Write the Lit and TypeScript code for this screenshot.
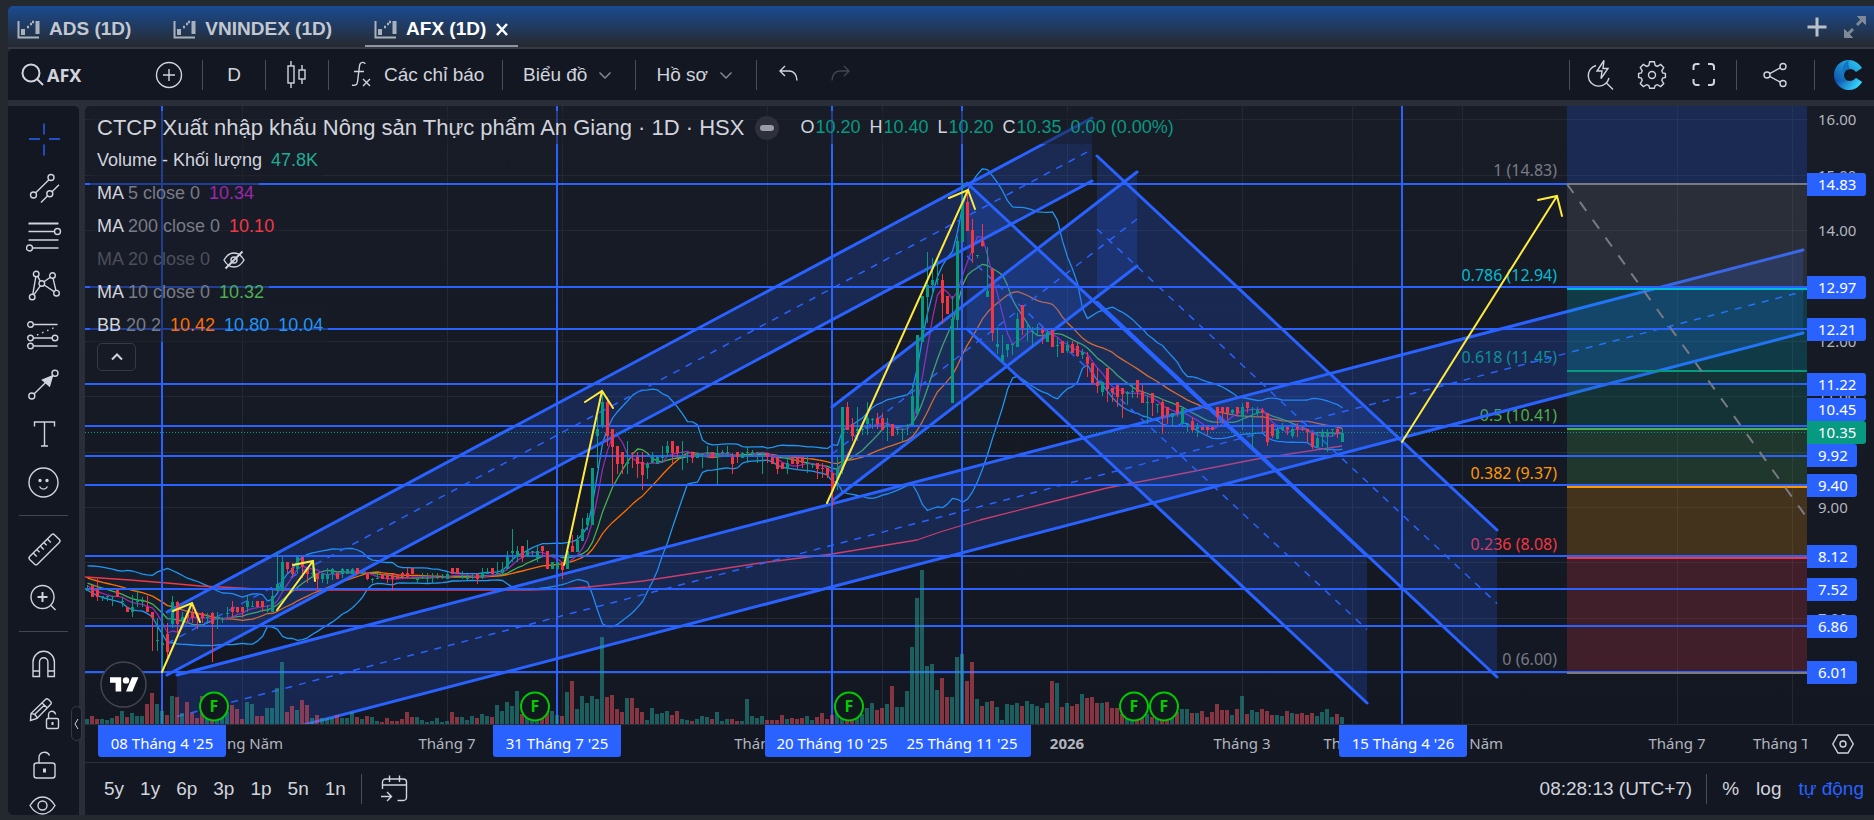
import { LitElement, html, svg, css } from "lit";
import { customElement, property, state } from "lit/decorators.js";
import { classMap } from "lit/directives/class-map.js";

/* ---------- market data: direction, high, body top, body bottom, low, volume ---------- */
const BARS = `
g585,589,591,591,5 r585,585,597,597,8 r579,590,597,601,5 g596,596,597,601,5 g596,596,597,601,4 g596,596,597,606,6 r589,590,597,597,8 g597,601,602,607,13 r607,607,612,612,7 g595,607,612,617,11
g589,601,602,607,8 g597,601,602,607,8 r596,607,612,612,20 r612,612,618,651,31 g618,640,641,651,20 g613,643,645,672,13 r623,634,652,660,9 g596,602,624,628,28 r601,602,624,633,27 g612,617,621,623,11
r612,613,618,622,22 r604,613,618,623,11 r612,613,618,629,6 r612,613,618,623,28 g613,617,618,624,15 r612,613,624,662,20 g612,617,619,629,15 g617,618,619,623,12 g607,613,614,617,12 r601,607,612,617,19
r607,607,612,613,15 r607,607,612,618,5 g596,601,607,612,22 g601,606,607,607,20 r601,601,607,607,8 r601,601,607,612,8 g605,610,611,612,16 g590,596,612,612,16 g551,584,591,591,36 g557,562,591,591,62
r562,562,569,573,12 r563,568,574,578,18 g557,557,569,574,14 r557,557,567,578,24 r567,568,574,583,19 g562,573,574,578,6 r573,573,579,590,9 g573,574,579,583,6 g568,574,579,584,6 g568,569,574,580,6
r573,573,579,579,9 g568,569,574,578,6 g569,569,574,574,6 g568,569,574,574,12 r568,568,574,574,7 g572,573,574,574,5 r573,573,579,580,8 g578,579,580,583,7 g574,578,579,579,3 r574,574,579,579,2
r573,574,579,583,6 r574,574,579,590,3 r574,574,579,579,3 r572,573,577,579,5 r568,573,577,579,12 r568,568,574,574,7 g577,579,580,583,7 g573,577,578,579,4 g573,578,579,583,2 g573,577,578,583,3
g573,577,578,579,6 g574,577,578,579,2 g572,574,579,579,3 r568,568,574,574,12 r568,568,574,574,7 g571,577,578,579,7 g574,578,579,580,4 g574,577,578,579,8 r573,574,579,584,6 g568,573,578,579,10
g568,573,574,574,8 r568,568,574,574,7 g562,573,574,574,19 g562,569,573,574,13 g551,557,569,569,22 g529,551,553,562,18 g546,551,557,562,33 r546,546,558,562,10 g540,551,557,557,8 g551,551,552,557,5
g546,551,558,562,6 r546,546,551,557,8 r551,551,569,569,12 g562,562,569,569,13 g562,562,569,569,9 r562,562,570,579,8 g547,551,569,569,32 r535,546,552,552,43 g535,540,552,552,15 g518,529,541,541,28
g513,518,525,530,21 g468,468,525,525,28 g417,429,436,468,25 g391,402,425,428,87 r397,402,436,446,27 r429,429,447,485,29 r446,446,464,474,15 r452,452,464,474,12 g441,462,464,474,26 r452,453,454,468,26
r452,457,464,478,16 r452,462,475,490,12 g462,464,468,479,4 g452,457,463,463,16 g457,457,464,464,10 g446,457,458,463,11 g441,446,453,457,13 r441,441,453,463,9 r446,446,453,457,13 g441,452,453,470,5
g452,453,454,463,4 r452,453,458,463,3 g452,453,458,458,5 g453,454,455,468,8 g446,452,453,457,7 r452,452,458,458,5 g446,453,457,484,12 g450,452,453,457,3 g446,452,453,457,5 r453,457,464,474,5
r452,452,457,463,3 g452,453,458,458,3 g446,452,453,463,25 g450,452,453,457,8 g452,452,453,463,6 g452,453,454,474,8 r453,453,457,463,4 r457,457,464,464,4 r457,457,469,474,4 r463,463,469,469,9
g457,463,469,474,5 r457,457,464,464,6 r457,457,464,469,5 r457,457,463,468,6 g457,463,464,473,8 g463,464,465,468,4 r463,463,469,479,7 r463,468,469,478,11 r468,468,475,478,5 r472,473,491,507,9
g457,468,479,490,12 g407,407,470,474,20 r402,407,430,430,6 r418,424,436,441,8 g407,429,431,441,10 g423,429,430,435,10 g402,418,424,435,16 g418,419,420,429,21 r413,418,424,429,14 r413,418,430,430,16
g418,424,425,441,20 r424,424,436,436,38 g429,429,430,435,17 g428,429,430,441,17 g424,425,426,435,33 g383,396,425,425,77 g335,335,414,415,126 g296,296,342,342,154 g252,285,297,323,58 g258,280,285,296,60
g258,279,280,285,34 r274,280,303,324,46 r296,296,314,314,27 g296,319,403,403,27 g236,241,320,330,67 g180,202,242,242,70 r192,202,231,231,43 r219,230,253,263,62 g255,255,256,258,25 r224,241,246,247,18
g247,291,297,297,22 r269,269,333,341,23 g327,344,347,354,17 g335,355,361,362,4 g344,344,350,357,20 g343,344,345,355,19 g313,319,347,347,21 r305,305,328,335,18 g323,329,330,341,23 g327,331,332,346,20
g324,329,330,336,18 r327,330,333,344,16 g330,332,342,342,21 r330,330,347,347,43 g338,345,346,357,41 r341,341,353,353,17 g341,345,351,353,21 r341,344,353,353,18 r343,346,356,357,20 g349,352,355,359,30
r352,357,364,377,26 r363,363,383,385,27 r368,382,386,393,21 g382,382,392,396,21 r368,368,389,402,22 r388,388,393,402,16 r385,385,397,407,16 r388,388,394,418,10 g391,392,394,405,8 g383,391,392,398,7
r380,380,392,398,9 r385,391,403,403,8 g395,402,403,424,10 r393,393,403,416,7 g404,404,405,413,6 r399,402,417,434,12 r407,407,415,424,9 g413,413,417,426,8 r402,402,413,417,12 g408,408,424,425,15
g423,424,425,432,15 r417,421,430,432,11 g423,427,429,437,11 r427,427,430,430,13 r426,427,430,435,7 r427,427,430,430,12 r407,407,417,425,20 r407,407,413,423,14 r407,407,413,420,14 g409,410,413,415,9
r407,407,413,416,15 g403,407,417,430,28 r402,402,408,413,10 g407,409,410,448,14 g407,410,413,417,12 r408,410,413,432,15 r413,413,442,446,13 r424,424,436,438,9 g427,429,439,439,9 g423,427,430,431,8
r427,427,430,435,13 g427,429,436,438,11 r423,427,429,437,10 r427,429,430,431,11 r429,429,432,442,9 r432,433,447,449,11 g433,438,447,448,8 g429,433,437,447,12 g429,433,436,452,15 g429,429,430,437,7
r428,429,433,438,10 g429,433,442,442,7`
  .trim()
  .split(/\s+/)
  .map((entry) => {
    const [high, top, bottom, low, volume] = entry.slice(1).split(",").map(Number);
    return { up: entry[0] === "g", high, top, bottom, low, volume };
  });

const FIRST_X = 87;
const STEP = 5;
const WARMUP = [569, 567, 569, 570, 571, 573, 573, 576, 577, 577, 578, 579, 580, 580, 581, 582, 582, 584, 586, 588];
const CLOSES = [...WARMUP, ...BARS.map((b) => (b.up ? b.top : b.bottom))];

const windowAt = (i: number, n: number) => CLOSES.slice(i + WARMUP.length - n + 1, i + WARMUP.length + 1);
const mean = (v: number[]) => v.reduce((a, b) => a + b, 0) / v.length;
const deviation = (v: number[]) => {
  const m = mean(v);
  return Math.sqrt(mean(v.map((a) => (a - m) ** 2)));
};
const series = (fn: (i: number) => number) =>
  BARS.map((_, i) => `${FIRST_X + STEP * i + 0.5},${fn(i).toFixed(1)}`);

const MA5 = series((i) => mean(windowAt(i, 5)));
const MA10 = series((i) => mean(windowAt(i, 10)));
const BASIS = series((i) => mean(windowAt(i, 20)));
const UPPER = series((i) => mean(windowAt(i, 20)) - 2 * deviation(windowAt(i, 20)));
const LOWER = series((i) => mean(windowAt(i, 20)) + 2 * deviation(windowAt(i, 20)));
const MA200 =
  "85,577 130,580 167,583 200,586 240,588 280,590 470,590 530,590 560,589 588,587 643,581 760,563 832,554 917,540 940,532 980,520 1047,503 1107,488 1180,474 1262,458 1342,446";

/* ---------- drawings ---------- */
const V_GRID = [242, 447, 562, 767, 882, 1067, 1242, 1352, 1462, 1677, 1792];
const H_GRID = [119, 175, 230, 286, 341, 396, 452, 507, 562, 618, 673];
const V_LINES = [162, 557, 832, 962, 1402];
const LEVELS = [184, 287, 329, 384, 426, 456, 485, 556, 589, 626, 672];

/* x1, x2, upper y at x1 and x2, lower y at x1 and x2 */
const CHANNELS = [
  [167, 1092, 612, 118, 675, 181],
  [177, 1803, 675, 250, 758, 333],
  [832, 1137, 407, 172, 501, 266],
  [967, 1367, 183, 556, 329, 703],
  [1097, 1497, 156, 530, 302, 677],
];

const ARROWS = [
  "M162 672L192 603M173 611L192 603L200 622",
  "M277 610L313 561M293 565L313 561L315 581",
  "M564 565L602 391M585 402L602 391L613 408",
  "M827 503L968 190M949 198L968 190L975 209",
  "M1402 442L1557 196M1538 200L1557 196L1562 216",
];

const FIB = [
  { y: 184, label: "1 (14.83)", color: "#787b86" },
  { y: 289, label: "0.786 (12.94)", color: "#00bcd4" },
  { y: 371, label: "0.618 (11.45)", color: "#089981" },
  { y: 429, label: "0.5 (10.41)", color: "#4caf50" },
  { y: 487, label: "0.382 (9.37)", color: "#ff9800" },
  { y: 558, label: "0.236 (8.08)", color: "#f23645" },
  { y: 673, label: "0 (6.00)", color: "#787b86" },
];
const FIB_FILLS = ["#787b86", "#00bcd4", "#089981", "#4caf50", "#ff9800", "#f23645"];

const FLAGS = [214, 535, 849, 1134, 1164];

const PRICE_TAGS = [
  { y: 185, text: "14.83" },
  { y: 288, text: "12.97" },
  { y: 330, text: "12.21" },
  { y: 385, text: "11.22" },
  { y: 410, text: "10.45" },
  { y: 456, text: "9.92" },
  { y: 486, text: "9.40" },
  { y: 557, text: "8.12" },
  { y: 590, text: "7.52" },
  { y: 627, text: "6.86" },
  { y: 673, text: "6.01" },
  { y: 433, text: "10.35", last: true },
];

const MONTHS = [
  { x: 242, text: "Tháng Năm" },
  { x: 447, text: "Tháng 7" },
  { x: 767, text: "Tháng 10" },
  { x: 1067, text: "2026", bold: true },
  { x: 1242, text: "Tháng 3" },
  { x: 1352, text: "Tháng 4" },
  { x: 1462, text: "Tháng Năm" },
  { x: 1677, text: "Tháng 7" },
  { x: 1792, text: "Tháng Tám" },
];
const DATE_TAGS = [
  { x: 162, w: 128, text: "08 Tháng 4 '25" },
  { x: 557, w: 128, text: "31 Tháng 7 '25" },
  { x: 832, w: 134, text: "20 Tháng 10 '25" },
  { x: 962, w: 138, text: "25 Tháng 11 '25" },
  { x: 1403, w: 128, text: "15 Tháng 4 '26" },
];

/* ---------- icons ---------- */
const ICONS: Record<string, unknown> = {
  cross: svg`<path d="M3 18h11M23 18h11M18 2.500v11M18 23.500v11"/>`,
  trend: svg`<circle cx="7.500" cy="25" r="3"/><circle cx="25" cy="7.500" r="3"/><path d="M9.700 22.800L22.900 9.700M15 32.500l6.700-6.700M26 21.700l7-7"/><circle cx="23.800" cy="23.800" r="3"/>`,
  fib: svg`<path d="M2.500 4.500h30" stroke-width="2"/><path d="M2.500 12.500h26M2.500 21h30M6.500 29h26"/><circle cx="31.500" cy="12.500" r="3"/><circle cx="3.500" cy="29" r="3"/>`,
  pattern: svg`<circle cx="10.200" cy="6" r="2.800"/><circle cx="26.500" cy="7.500" r="2.800"/><circle cx="15.800" cy="15.500" r="2.800"/><circle cx="6.200" cy="29" r="2.800"/><circle cx="30.500" cy="25.200" r="2.800"/><path d="M9.800 8.800L6.800 26.200M11.700 8.400l2.600 4.700M18 13.800l6.300-4.600M27 10.200l2.900 12.200M14.300 17.900L8 26.600M18.200 17l9.900 6.700"/>`,
  forecast: svg`<circle cx="4.500" cy="7.500" r="2.800"/><circle cx="4.500" cy="21" r="2.800"/><circle cx="29" cy="21" r="2.800"/><circle cx="4.500" cy="29" r="2.800"/><path d="M7.500 7.500h24M7.500 21h18.500M7.500 29h24"/><path d="M11 18L31 9.500" stroke-dasharray="1.500 4"/>`,
  arrow: svg`<circle cx="5.800" cy="30" r="3"/><circle cx="29" cy="7.200" r="3"/><path d="M8 28L27 9.300"/><path d="M26.500 9.800L16.500 14l7 6z" fill="currentColor"/>`,
  text: svg`<path d="M8.500 11.500v-4.500h20v4.500M18.500 7v24M15 31h7"/>`,
  smile: svg`<circle cx="17.500" cy="18.500" r="14.500"/><circle cx="14" cy="16.500" r="1" fill="currentColor"/><circle cx="21" cy="16.500" r="1" fill="currentColor"/><path d="M13.500 22.500c2 3.500 6 3.500 8 0"/>`,
  ruler: svg`<g transform="rotate(-45 18.500 18.500)"><rect x="1" y="13" width="35" height="11" rx="2"/><path d="M8 13v5M13 13v4M18 13v5M23 13v4M28 13v5"/></g>`,
  zoom: svg`<circle cx="16.500" cy="17" r="11.500"/><path d="M25 25.500l4.500 4.500"/><path d="M16.500 12v10M11.500 17h10" stroke-width="2"/>`,
  magnet: svg`<path d="M7 29.500V15a10.700 10.700 0 0 1 21.400 0v14.500h-6.500V15a4.200 4.200 0 0 0-8.400 0v14.500zM7 24h6.500M21.900 24h6.500"/>`,
  pencil: svg`<path d="M4.500 24.500l.500-7L19.500 3.500c1-1 2-.800 3 0l2 2c1 1 1 2 0 3L11 22.500zM5 17.500c3 0 6 2 6 5M16 7l5.500 5M8.500 18.500l10-9.500"/><rect x="20.500" y="22.500" width="12" height="10" rx="1.500"/><path d="M22.500 22.500v-3.500a3.500 3.500 0 0 1 7-.500"/><path d="M26.500 26v3" stroke-width="2"/>`,
  lock: svg`<rect x="8" y="18" width="21" height="15" rx="2.500"/><path d="M13 18v-5a5.500 5.500 0 0 1 10.500-2.500"/><path d="M18.500 23.500v4" stroke-width="3"/>`,
  eye: svg`<path d="M4 18.500c3-5 8-8.500 12.500-8.500s9.500 3.500 12.500 8.500c-3 5-8 8.500-12.500 8.500S7 23.500 4 18.500z"/><circle cx="16.500" cy="18.500" r="4.500"/>`,
  search: svg`<circle cx="16" cy="16" r="8.500" stroke-width="2"/><path d="M22 22l6 6" stroke-width="2"/>`,
  plus: svg`<circle cx="18" cy="18" r="12.500"/><path d="M18 12v12M12 18h12"/>`,
  candles: svg`<path d="M12 4v5M12 26v5M23 8v5M23 22v5"/><rect x="9" y="9" width="6" height="17"/><rect x="20" y="13" width="6" height="9"/>`,
  fx: svg`<path d="M22 7c0-2-5-3-5.500 2l-2 16c-.300 4-4.500 3.500-5.500 3M11 14.500h10M20 22l7 7M27 22l-7 7"/>`,
  undo: svg`<path d="M15 9l-5 5 5 5M10 14h9c5 0 8 4 8 9.500"/>`,
  redo: svg`<path d="M22 9l5 5-5 5M27 14h-9c-5 0-8 4-8 9.500"/>`,
  quick: svg`<path d="M14 8.500a10.500 10.500 0 1 0 13 12.500M24.500 26l6.500 6.500"/><path d="M22 3.500l-7 10.500h5l-1 7.500 7-10h-5z"/>`,
  gear: svg`<circle cx="18" cy="18" r="3.500"/><path d="M15.700 4.800h4.600l.9 3.700 2.200.9 3.300-2 3 3.100-1.900 3.300.9 2.200 2.700.5v4l-2.700.6-.9 2.200 1.900 3.300-3 3-3.300-1.900-2.200.9-.9 2.700h-4.600l-.9-2.700-2.200-.9-3.300 1.900-3-3 1.900-3.300-.9-2.200-2.700-.6v-4l2.700-.5.900-2.200-1.900-3.300 3-3.100 3.300 2 2.200-.9z"/>`,
  full: svg`<path d="M7.500 13v-3a3 3 0 0 1 3-3h3M22 7h3a3 3 0 0 1 3 3v3M28 22v3a3 3 0 0 1-3 3h-3M13.500 28h-3a3 3 0 0 1-3-3v-3" stroke-width="2"/>`,
  share: svg`<circle cx="9" cy="18" r="3"/><circle cx="25" cy="9.500" r="3"/><circle cx="25" cy="26.500" r="3"/><path d="M11.700 16.600l10.600-5.700M11.700 19.400l10.600 5.700"/>`,
  calendar: svg`<path d="M6.500 18V11a3 3 0 0 1 3-3h18a3 3 0 0 1 3 3v15.500a3 3 0 0 1-3 3h-6M6.500 14h24M13.500 4.500V11M23.500 4.500V11M5 25.500h10M11 21l4.500 4.500L11 30"/>`,
  hex: svg`<path d="M13 9h10l5.200 9L23 27H13l-5.200-9z"/><circle cx="18" cy="18" r="3"/>`,
  hidden: svg`<path d="M8 18c2.500-4.500 6-7 10-7s7.500 2.500 10 7c-2.500 4.500-6 7-10 7s-7.500-2.500-10-7z"/><circle cx="18" cy="18" r="3"/><path d="M26.500 9.500l-17 17" stroke-width="2"/>`,
  down: svg`<path d="M12.500 15.500l5.500 5.500 5.500-5.500"/>`,
  up: svg`<path d="M13 20.500l5-5 5 5" stroke-width="2"/>`,
  close: svg`<path d="M13 13l10 11M23 13l-10 11" stroke-width="2.500"/>`,
  add: svg`<path d="M18 8.500v19M8.500 18h19" stroke-width="3"/>`,
  expand: svg`<path d="M20 16l5-5M16 20l-5 5" stroke-width="3"/><path d="M20.500 7.500h8v8zM7.500 20.500v8h8z" fill="currentColor" stroke-width="1"/>`,
  tab: svg`<path d="M8.500 10v16.500H29" stroke-width="2"/><path d="M11 18h4v6h-4zM25.500 10h4v13h-4z" fill="currentColor" stroke="none"/><path d="M17 16h2M20 13h2M22 11h2" stroke-width="2.500"/>`,
};

const icon = (name: string) => html`<svg class="icon" width="36" height="36" viewBox="0 0 36 36" fill="none" stroke="currentColor" stroke-width="1.400" aria-hidden="true">${ICONS[name]}</svg>`;

const iconStyles = css`
  .icon {
    display: block;
    flex: none;
  }
  button {
    display: flex;
    align-items: center;
    justify-content: center;
    padding: 0;
    border: 0;
    background: none;
    color: inherit;
    font: inherit;
    cursor: pointer;
  }
`;

/* ---------- chart with its two axes ---------- */
@customElement("price-chart")
export class PriceChart extends LitElement {
  @property() symbolName = "";

  static styles = [
    iconStyles,
    css`
      :host {
        display: grid;
        grid-template-columns: minmax(0, 1fr) 67px;
        grid-template-rows: minmax(0, 1fr) 39px;
        color: #d1d4dc;
        background: linear-gradient(#181c27, #131722);
        border-radius: 5px 0 0 0;
        overflow: hidden;
      }
      .pane {
        position: relative;
        overflow: hidden;
      }
      .layer {
        display: block;
        width: 100%;
        height: 100%;
      }
      .axis-text {
        font-family: "Noto Sans", "Open Sans", sans-serif;
        font-size: 15px;
        fill: #b2b5be;
      }
      .fib-text {
        font-size: 16px;
      }
      .tag-text {
        fill: #fff;
      }
      .strong {
        font-weight: 700;
      }
      .times {
        border-top: 1px solid #2a2e39;
        border-bottom: 1px solid #2a2e39;
        overflow: hidden;
      }
      .corner {
        border-top: 1px solid #2a2e39;
        border-bottom: 1px solid #2a2e39;
        padding-left: 4px;
      }
      .flag-text {
        font: 700 16px "Noto Sans", sans-serif;
        fill: #0c0;
      }
      .legend {
        position: absolute;
        left: 5px;
        top: 5px;
        display: flex;
        flex-direction: column;
        align-items: flex-start;
        font-family: "Liberation Sans", Arial, sans-serif;
        font-size: 18px;
      }
      .row {
        display: flex;
        align-items: center;
        height: 33px;
        padding: 0 5px 0 7px;
        gap: 9px;
        background: rgba(24, 28, 39, 0.5);
        white-space: nowrap;
      }
      .title {
        margin: 0;
        font-size: 22px;
        font-weight: 400;
      }
      .minus {
        width: 24px;
        height: 24px;
        margin: 0 12px 0 2px;
        border-radius: 12px;
        background: #2d303b;
      }
      .minus::before {
        content: "";
        width: 14px;
        height: 6px;
        border-radius: 3px;
        background: #9a9cab;
      }
      .quote {
        display: flex;
        gap: 1px;
      }
      .quote b {
        font-weight: 400;
        color: #089981;
      }
      .dim {
        color: #787b86;
      }
      .off {
        color: #4c4f5a;
        gap: 6px;
      }
      .off .icon {
        color: #d1d4dc;
      }
      .teal { color: #22ab94; }
      .purple { color: #9c27b0; }
      .red { color: #f23645; }
      .green { color: #4caf50; }
      .orange { color: #ff6d00; }
      .blue { color: #2196f3; }
      .collapse {
        width: 39px;
        height: 28px;
        margin: 1px 0 0 7px;
        border: 1px solid #363a45;
        border-radius: 5px;
      }
    `,
  ];

  private drawings() {
    return svg`
      ${CHANNELS.map(
        ([x1, x2, a1, a2, b1, b2]) => svg`
        <path d="M${x1} ${a1}L${x2} ${a2}V${b2}L${x1} ${b1}Z" fill="#2962ff" fill-opacity="0.2"/>
        <path d="M${x1} ${a1}L${x2} ${a2}M${x1} ${b1}L${x2} ${b2}" stroke="#2962ff" stroke-width="3" stroke-linecap="round"/>
        <path d="M${x1} ${(a1 + b1) / 2}L${x2} ${(a2 + b2) / 2}" stroke="#2962ff" stroke-width="1.500" stroke-dasharray="7 7"/>`
      )}
      ${FIB_FILLS.map(
        (fill, i) => svg`<rect x="1567" y=${FIB[i].y} width="2000" height=${FIB[i + 1].y - FIB[i].y} fill=${fill} fill-opacity="0.2"/>`
      )}
      <rect x="1567" y="106" width="2000" height="78" fill="#2962ff" fill-opacity="0.2"/>
      ${LEVELS.map((y) => svg`<path d="M85 ${y}H4000" stroke="#2962ff" stroke-width="2"/>`)}
      ${V_LINES.map((x) => svg`<path d="M${x} 106V724" stroke="#2962ff" stroke-width="2"/>`)}
      ${FIB.map((f) => svg`<path d="M1567 ${f.y}H4000" stroke=${f.color} stroke-width="2"/>`)}
      <path d="M1567 184L1805 515" stroke="#787b86" stroke-width="2" stroke-dasharray="11 11"/>`;
  }

  private bars() {
    return BARS.map((b, i) => {
      const x = FIRST_X + STEP * i;
      const color = b.up ? "#089981" : "#f23645";
      return svg`
        <rect x=${x - 2} y=${724 - b.volume} width="4" height=${b.volume} fill=${b.up ? "#26a69a" : "#f7525f"} fill-opacity="0.5"/>
        <rect x=${x} y=${b.high} width="1" height=${b.low - b.high} fill=${color}/>
        <rect x=${x - 1} y=${b.top} width="3" height=${b.bottom - b.top} fill=${color}/>`;
    });
  }

  private averages() {
    return svg`
      <polygon points=${[...UPPER, ...[...LOWER].reverse()].join(" ")} fill="#2196f3" fill-opacity="0.05"/>
      <g stroke-width="1.300" stroke-linejoin="round">
        <polyline points=${UPPER.join(" ")} stroke="#2196f3"/>
        <polyline points=${LOWER.join(" ")} stroke="#2196f3"/>
        <polyline points=${MA200} stroke="#f23645"/>
        <polyline points=${BASIS.join(" ")} stroke="#ff6d00"/>
        <polyline points=${MA10.join(" ")} stroke="#4caf50"/>
        <polyline points=${MA5.join(" ")} stroke="#9c27b0"/>
      </g>`;
  }

  render() {
    return html`
      <div class="pane">
        <svg class="layer" role="img" aria-label=${this.symbolName}>
          <g transform="translate(-85 -106)" fill="none">
            <g stroke="#242833">
              ${V_GRID.map((x) => svg`<path d="M${x + 0.5} 106V724"/>`)}
              ${H_GRID.map((y) => svg`<path d="M85 ${y + 0.5}H4000"/>`)}
            </g>
            ${this.averages()}
            ${FIB.map((f) => svg`<text class="axis-text fib-text" style="fill:${f.color}" x="1557" y=${f.y - 8} text-anchor="end">${f.label}</text>`)}
            ${this.drawings()}
            <path d="M85 432.500H4000" stroke="#089981" stroke-dasharray="1 2"/>
            ${this.bars()}
            ${ARROWS.map((d) => svg`<path d=${d} stroke="#ffeb3b" stroke-width="2" stroke-linecap="round"/>`)}
            ${FLAGS.map(
              (x) => svg`<circle cx=${x} cy="706.500" r="14" fill="#10191d" stroke="#0c0" stroke-width="2"/>
                <text class="flag-text" x=${x} y="712" text-anchor="middle">F</text>`
            )}
            <circle cx="123.500" cy="684.500" r="22.500" fill="#131722" stroke="#434651" stroke-width="1.500"/>
            <g transform="translate(110 674) scale(0.800)" fill="#fff">
              <path d="M14 22H7V11H0V4h14zM28 22h-8l7.500-18h8z"/><circle cx="20" cy="8" r="4"/>
            </g>
          </g>
        </svg>
        <div class="legend">
          <div class="row">
            <h1 class="title">${this.symbolName} · 1D · HSX</h1>
            <button class="minus" aria-label="Ẩn"></button>
            <span class="quote">O<b>10.20</b></span><span class="quote">H<b>10.40</b></span>
            <span class="quote">L<b>10.20</b></span><span class="quote">C<b>10.35</b></span>
            <span class="quote"><b>0.00 (0.00%)</b></span>
          </div>
          <div class="row"><span>Volume - Khối lượng</span><span class="teal">47.8K</span></div>
          <div class="row"><span>MA <span class="dim">5 close 0</span></span><span class="purple">10.34</span></div>
          <div class="row"><span>MA <span class="dim">200 close 0</span></span><span class="red">10.10</span></div>
          <div class="row off"><span>MA 20 close 0</span>${icon("hidden")}</div>
          <div class="row"><span>MA <span class="dim">10 close 0</span></span><span class="green">10.32</span></div>
          <div class="row"><span>BB <span class="dim">20 2</span></span><span class="orange">10.42</span><span class="blue">10.80</span><span class="blue">10.04</span></div>
          <button class="collapse" aria-label="Thu gọn">${icon("up")}</button>
        </div>
      </div>

      <svg class="layer" aria-label="Giá">
        <g transform="translate(0 -106)">
          ${H_GRID.map((y, i) => svg`<text class="axis-text" x="11" y=${y + 6}>${(16 - i).toFixed(2)}</text>`)}
          ${PRICE_TAGS.map(
            (t) => svg`<rect x="-4" y=${t.y - 12} width=${t.text.length === 5 ? 63 : 54} height="23" rx="3" fill=${t.last ? "#089981" : "#2962ff"}/>
              <text class="axis-text tag-text" x="11" y=${t.y + 5}>${t.text}</text>`
          )}
        </g>
      </svg>

      <div class="times">
        <svg class="layer" aria-label="Thời gian">
          <g transform="translate(-85 -725)" text-anchor="middle">
            ${MONTHS.map((m) => svg`<text class=${m.bold ? "axis-text strong" : "axis-text"} x=${m.x} y="749">${m.text}</text>`)}
            ${DATE_TAGS.map(
              (t) => svg`<rect x=${t.x - t.w / 2} y="720" width=${t.w} height="37" rx="3" fill="#2962ff"/>
                <text class="axis-text tag-text" x=${t.x} y="749">${t.text}</text>`
            )}
          </g>
        </svg>
      </div>
      <button class="corner" aria-label="Cài đặt trục">${icon("hex")}</button>
    `;
  }
}

/* ---------- page ---------- */
@customElement("app-root")
export class AppRoot extends LitElement {
  @state() private active = "AFX";

  static styles = [
    iconStyles,
    css`
      :host {
        display: flex;
        flex-direction: column;
        box-sizing: border-box;
        height: 100vh;
        min-height: 600px;
        padding: 6px 0 5px 8px;
        background: #24282f;
        color: #d1d4dc;
        font-family: "Liberation Sans", Arial, sans-serif;
        font-size: 19px;
      }
      .tabs {
        display: flex;
        height: 41px;
        background: linear-gradient(#1a4b91, #262b33 95%);
        border-bottom: 2px solid #363a45;
        border-radius: 5px 0 0 0;
      }
      .tab {
        display: flex;
        align-items: center;
        padding: 4px 8px 0 2px;
        margin-right: 25px;
        color: #c3c8d0;
        font-weight: 700;
      }
      .tab button {
        gap: 3px;
      }
      .tab.active {
        color: #fff;
        box-shadow: inset 0 -2px #8f96a3;
        margin-right: 0;
        padding-right: 0;
      }
      .tab .icon {
        color: #a9b1bd;
      }
      .tab.active .close .icon {
        color: #fff;
      }
      .tab .close {
        width: 32px;
      }
      .window {
        display: flex;
        margin-left: auto;
        color: #b9c0ca;
      }
      .window .faded {
        color: #7f8896;
      }
      .window button {
        width: 38px;
      }
      .toolbar {
        display: flex;
        align-items: center;
        flex: none;
        height: 51px;
        background: #131722;
        border-radius: 5px 0 0 0;
      }
      .symbol {
        width: 143px;
        padding-left: 7px;
        justify-content: flex-start;
        font: 700 18px "Noto Sans", sans-serif;
      }
      .symbol .icon {
        margin-right: -4px;
      }
      .bar {
        flex: none;
        width: 1px;
        height: 30px;
        background: #4a4d58;
      }
      .compare {
        padding-right: 15px;
      }
      .square {
        width: 62px;
        height: 40px;
      }
      .wide {
        width: 173px;
        gap: 5px;
        padding-left: 14px;
        justify-content: flex-start;
      }
      .menu {
        padding: 0 12px 0 20px;
      }
      .menu .icon {
        color: #8b8e99;
      }
      .history {
        padding: 0 0 0 13px;
        display: flex;
        gap: 16px;
      }
      .disabled {
        color: #434651;
      }
      .right {
        display: flex;
        align-items: center;
        margin-left: auto;
      }
      .right .group {
        display: flex;
        padding: 0 14px 0 12px;
        gap: 16px;
      }
      .share {
        width: 77px;
        height: 40px;
      }
      .brand {
        display: block;
        margin: 0 10px 0 19px;
      }
      .main {
        display: grid;
        grid-template-columns: 71px minmax(0, 1fr);
        grid-template-rows: minmax(0, 1fr) 52px;
        column-gap: 6px;
        flex: 1;
        min-height: 0;
        padding-top: 6px;
        background: #2a2e39;
        border-radius: 0 0 0 5px;
        position: relative;
      }
      .tools {
        grid-row: 1 / 3;
        display: flex;
        flex-direction: column;
        align-items: center;
        padding-top: 8px;
        overflow: hidden;
        background: #131722;
        border-radius: 0 5px 0 5px;
      }
      .tools button {
        flex: none;
        width: 52px;
        height: 49px;
      }
      .tools .selected {
        color: #2962ff;
      }
      .tools .short {
        height: 36px;
      }
      .tools hr {
        flex: none;
        width: 49px;
        height: 1px;
        margin: 9px 0 8px;
        border: 0;
        background: #434651;
      }
      .handle {
        position: absolute;
        left: 63px;
        bottom: 74px;
        width: 11px;
        height: 35px;
        border: 1px solid #363a45;
        border-radius: 6px;
        background: #131722;
      }
      .footer {
        display: flex;
        align-items: center;
        padding: 0 10px 0 19px;
        background: #131722;
      }
      .ranges {
        display: flex;
        gap: 16px;
        padding-right: 15px;
      }
      .goto {
        padding-left: 14px;
      }
      .clock {
        margin-left: auto;
        padding-right: 14px;
      }
      .scales {
        display: flex;
        gap: 17px;
        padding-left: 15px;
      }
      .auto {
        color: #2962ff;
      }
    `,
  ];

  private tab(symbol: string) {
    const active = symbol === this.active;
    return html`<div class=${classMap({ tab: true, active })}>
      <button @click=${() => (this.active = symbol)}>${icon("tab")}<span>${symbol} (1D)</span></button>
      ${active ? html`<button class="close" aria-label="Đóng">${icon("close")}</button>` : null}
    </div>`;
  }

  private tool(name: string, label: string, extra = "") {
    return html`<button class=${extra} aria-label=${label}>${icon(name)}</button>`;
  }

  render() {
    return html`
      <nav class="tabs">
        ${["ADS", "VNINDEX", "AFX"].map((s) => this.tab(s))}
        <div class="window">
          <button aria-label="Thêm tab">${icon("add")}</button>
          <button class="faded" aria-label="Mở rộng">${icon("expand")}</button>
        </div>
      </nav>

      <header class="toolbar">
        <button class="symbol">${icon("search")}<span>AFX</span></button>
        <button class="compare" aria-label="So sánh">${icon("plus")}</button>
        <span class="bar"></span>
        <button class="square">D</button>
        <span class="bar"></span>
        <button class="square" aria-label="Kiểu nến">${icon("candles")}</button>
        <span class="bar"></span>
        <button class="wide">${icon("fx")}<span>Các chỉ báo</span></button>
        <span class="bar"></span>
        <button class="menu"><span>Biểu đồ</span>${icon("down")}</button>
        <span class="bar"></span>
        <button class="menu"><span>Hồ sơ</span>${icon("down")}</button>
        <span class="bar"></span>
        <div class="history">
          <button aria-label="Hoàn tác">${icon("undo")}</button>
          <button class="disabled" aria-label="Làm lại">${icon("redo")}</button>
        </div>
        <div class="right">
          <span class="bar"></span>
          <div class="group">
            <button aria-label="Tìm nhanh">${icon("quick")}</button>
            <button aria-label="Cài đặt">${icon("gear")}</button>
            <button aria-label="Toàn màn hình">${icon("full")}</button>
          </div>
          <span class="bar"></span>
          <button class="share" aria-label="Chia sẻ">${icon("share")}</button>
          <span class="bar"></span>
          <svg class="brand" width="30" height="30" viewBox="0 0 30 30" role="img" aria-label="Logo">
            <defs>
              <linearGradient id="a" x1="0" y1="1" x2="1" y2="0"><stop offset="0" stop-color="#0a3a9e"/><stop offset="1" stop-color="#2bd0f5"/></linearGradient>
              <linearGradient id="b" x1="0" y1="0" x2="1" y2="0.300"><stop offset="0" stop-color="#0b3fa3"/><stop offset="1" stop-color="#35dcff"/></linearGradient>
            </defs>
            <path d="M28 8C25 3 20 0 15 0 6 0 0 7 0 15s6 15 15 15c5 0 10-3 13-8l-6-4c-2 2-3 3-6 3-4 0-6-3-6-6s2-6 6-6c3 0 4 1 6 3z" fill="url(#a)"/>
            <path d="M1 19c3 3 8 4 13 2 3 1 6-1 8-3l6 4c-3 5-8 8-13 8C8 30 3 25 1 19z" fill="url(#b)"/>
            <path d="M15 0C9 3 7 9 10 15c0-3 2-6 6-6-2-3-2-6-1-9z" fill="#1372c4"/>
          </svg>
        </div>
      </header>

      <div class="main">
        <aside class="tools">
          ${this.tool("cross", "Con trỏ", "selected")} ${this.tool("trend", "Đường xu hướng")}
          ${this.tool("fib", "Fibonacci")} ${this.tool("pattern", "Mô hình")}
          ${this.tool("forecast", "Dự báo")} ${this.tool("arrow", "Mũi tên")}
          ${this.tool("text", "Văn bản")} ${this.tool("smile", "Biểu tượng")}
          <hr />
          ${this.tool("ruler", "Đo")} ${this.tool("zoom", "Phóng to")}
          <hr />
          ${this.tool("magnet", "Nam châm")} ${this.tool("pencil", "Giữ chế độ vẽ")}
          ${this.tool("lock", "Khoá")} ${this.tool("eye", "Ẩn hình vẽ", "short")}
        </aside>
        <price-chart symbolName="CTCP Xuất nhập khẩu Nông sản Thực phẩm An Giang"></price-chart>
        <footer class="footer">
          <div class="ranges">
            ${["5y", "1y", "6p", "3p", "1p", "5n", "1n"].map((r) => html`<button>${r}</button>`)}
          </div>
          <span class="bar"></span>
          <button class="goto" aria-label="Đi đến ngày">${icon("calendar")}</button>
          <button class="clock">08:28:13 (UTC+7)</button>
          <span class="bar"></span>
          <div class="scales"><button>%</button><button>log</button><button class="auto">tự động</button></div>
        </footer>
        <button class="handle" aria-label="Ẩn thanh công cụ">
          <svg width="7" height="14" viewBox="0 0 7 14" fill="none" stroke="currentColor"><path d="M5 2L2 7l3 5" /></svg>
        </button>
      </div>
    `;
  }
}
